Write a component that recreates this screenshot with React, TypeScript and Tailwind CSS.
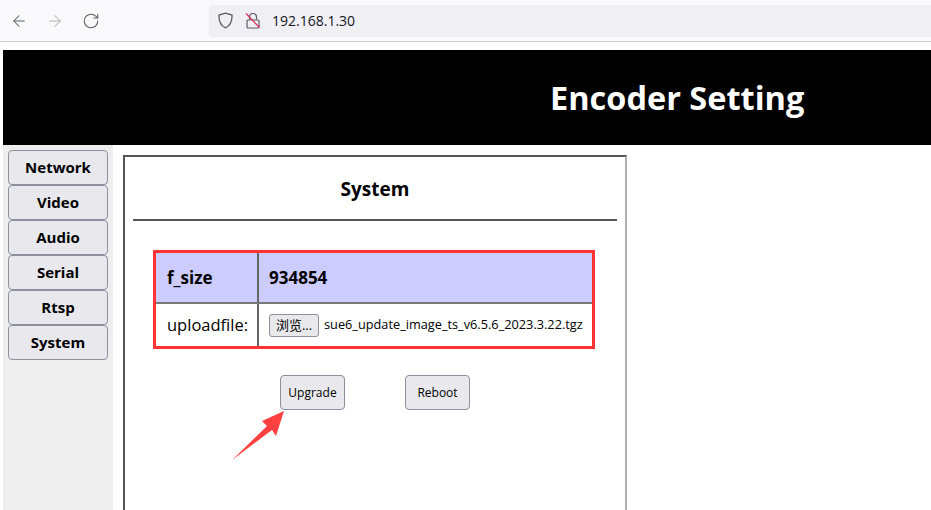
import { ArrowLeft, ArrowRight, RotateCw } from 'lucide-react'

const menu = ['Network', 'Video', 'Audio', 'Serial', 'Rtsp', 'System']
const uiFont = "font-['Open_Sans','Noto_Sans_CJK_SC',sans-serif]"

function ShieldIcon() {
  return (
    <svg width="16" height="17" viewBox="0 0 16 17" fill="none" stroke="#5b5b66" strokeWidth="1.3">
      <path d="M7.5 1.2 L14 3 C14.3 9 12.5 13.5 7.5 15.8 C2.5 13.5 0.7 9 1 3 Z" />
    </svg>
  )
}

function NoLockIcon() {
  return (
    <svg width="16" height="17" viewBox="0 0 16 17" fill="none">
      <path d="M4.5 7.5 V5 a3.5 3.5 0 0 1 7 0 V7.5" stroke="#5b5b66" strokeWidth="1.2" />
      <path d="M3 8 H13 a1 1 0 0 1 1 1 V15 a1 1 0 0 1 -1 1 H3 a1 1 0 0 1 -1 -1 V9 a1 1 0 0 1 1 -1 Z" stroke="#5b5b66" strokeWidth="1.2" />
      <path d="M1 1.5 L14.5 15.5" stroke="#e22850" strokeWidth="1.2" />
    </svg>
  )
}

export default function App() {
  return (
    <div className={`h-[510px] w-[931px] overflow-hidden bg-white ${uiFont}`}>
      <div className="flex h-[42px] items-center border-b border-[#cfcfd8] bg-[#f9f9fb]">
        <div className="flex w-[209px] items-center pl-[10px] text-[#5b5b66]">
          <ArrowLeft size={18} strokeWidth={1.4} />
          <ArrowRight size={18} strokeWidth={1.4} className="ml-[18px] text-[#b4b4ba]" />
          <RotateCw size={18} strokeWidth={1.4} className="ml-[18px]" />
        </div>
        <div className="flex h-[32px] w-[722px] items-center gap-[11px] rounded-l-[4px] bg-[#f0f0f4] pl-[9px]">
          <ShieldIcon />
          <NoLockIcon />
          <span className="text-[14px] text-[#15141a]">192.168.1.30</span>
        </div>
      </div>

      <div className="ml-[3px] mt-[8px]">
        <div className="flex h-[95px] items-center bg-black pl-[547px] pt-[1px]">
          <h1 className="text-[32.5px] font-bold leading-none text-white">Encoder Setting</h1>
        </div>

        <div className="flex">
          <nav className="flex h-[365px] w-[110px] flex-col bg-[#eeeeee] px-[5px] pt-[5px]">
            {menu.map((item) => (
              <button
                key={item}
                className="h-[35px] w-[100px] rounded-[4px] border border-[#8f8f9d] bg-[#e9e9ed] text-[15px] font-bold text-black"
              >
                {item}
              </button>
            ))}
          </nav>

          <main className="ml-[10px] mt-[10px] h-[400px] w-[504px] border-2 border-t-[#555555] border-r-[#b0b0b0] border-b-[#b0b0b0] border-l-[#555555] px-[8px]">
            <h2 className="h-[62px] pt-[17px] text-center text-[19px] leading-[30px] font-bold text-black">System</h2>
            <hr className="border-t-2 border-[#555555]" />

            <div className="ml-[20px] mt-[29px] w-[442px] border-[3px] border-[#ff3333]">
              <div className="flex h-[51px] border-b-2 border-[#777777] bg-[#ccccff] text-[17px] font-bold text-black">
                <div className="flex w-[103px] items-center border-r-2 border-[#666666] pl-[11px]">f_size</div>
                <div className="flex items-center pl-[10px]">934854</div>
              </div>
              <div className="flex h-[42px] text-black">
                <div className="flex w-[103px] items-center border-r-2 border-[#666666] pl-[11px] text-[16.5px]">uploadfile:</div>
                <div className="flex items-center pl-[10px]">
                  <button className="h-[23px] w-[50px] rounded-[3px] border border-[#8f8f9d] bg-[#e9e9ed] text-[13px] leading-none">浏览...</button>
                  <span className="ml-[5px] text-[12.75px] whitespace-nowrap">sue6_update_image_ts_v6.5.6_2023.3.22.tgz</span>
                </div>
              </div>
            </div>

            <div className="relative ml-[147px] mt-[26px] flex gap-[60px]">
              <button className="h-[35px] w-[65px] rounded-[4px] border border-[#8f8f9d] bg-[#e9e9ed] pt-[1px] text-[12px] text-black">Upgrade</button>
              <button className="h-[35px] w-[65px] rounded-[4px] border border-[#8f8f9d] bg-[#e9e9ed] pt-[1px] text-[12px] text-black">Reboot</button>
              <svg className="absolute left-[-49px] top-[35px]" width="56" height="52" viewBox="0 0 56 52">
                <path d="M53 1 L45 26 L41 20 L1 50 L36 16 L31 11 Z" fill="#ff4040" />
              </svg>
            </div>
          </main>
        </div>
      </div>
    </div>
  )
}
